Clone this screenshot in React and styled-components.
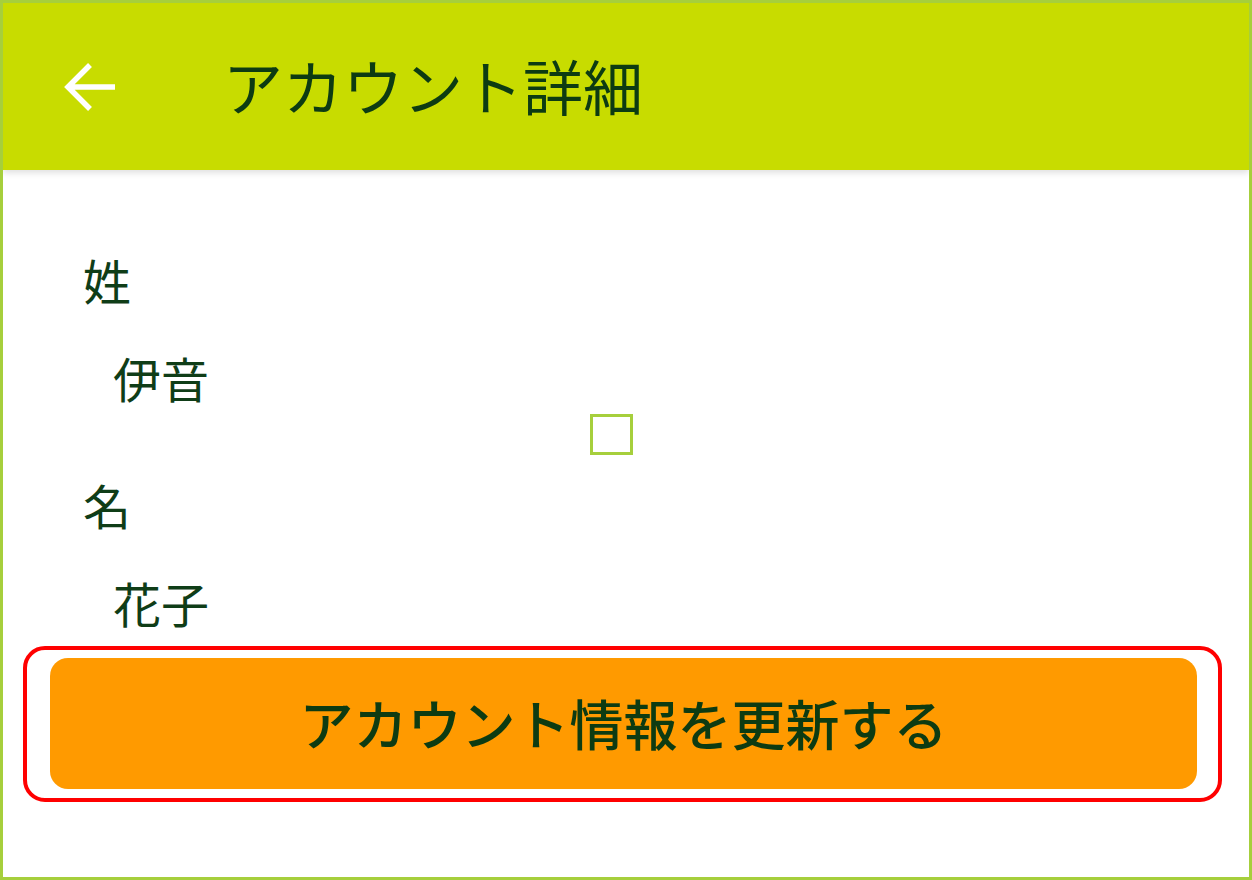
import React from 'react';
import styled, { createGlobalStyle } from 'styled-components';

const GlobalStyle = createGlobalStyle`
  html, body {
    margin: 0;
    padding: 0;
    background: #ffffff;
  }
  body {
    font-family: "Noto Sans CJK JP", "Noto Sans", sans-serif;
    color: #0f3d17;
  }
`;

const Screen = styled.div`
  position: relative;
  width: 1252px;
  height: 880px;
  box-sizing: border-box;
  border: 3px solid #a6cf3c;
  background: #ffffff;
  display: flex;
  flex-direction: column;
  overflow: hidden;
`;

const Header = styled.header`
  height: 167px;
  flex-shrink: 0;
  background: #c8dc00;
  display: flex;
  align-items: center;
  box-shadow: 0 3px 6px rgba(0, 0, 0, 0.12);
  position: relative;
  z-index: 1;
`;

const BackButton = styled.button`
  width: 72px;
  height: 72px;
  margin-left: 51px;
  padding: 0;
  border: none;
  background: transparent;
  display: flex;
  align-items: center;
  justify-content: center;
  cursor: pointer;
`;

const Title = styled.h1`
  margin: 0 0 4px 97px;
  font-size: 60px;
  font-weight: 400;
  line-height: 1;
  color: #0d3b12;
  letter-spacing: 0;
`;

const Body = styled.main`
  flex: 1;
  display: flex;
  flex-direction: column;
  padding: 80px 27px 0 20px;
`;

const Field = styled.div`
  display: flex;
  flex-direction: column;
  gap: 40px;
  padding-left: 60px;
  margin-bottom: ${(p) => p.$after || 0}px;
`;

const Label = styled.div`
  font-size: 48px;
  line-height: 58px;
`;

const Value = styled.div`
  font-size: 48px;
  line-height: 58px;
  padding-left: 30px;
`;

const Placeholder = styled.div`
  position: absolute;
  left: 587px;
  top: 411px;
  width: 43px;
  height: 41px;
  box-sizing: border-box;
  border: 3px solid #a6cf3c;
`;

const Highlight = styled.div`
  margin-top: 15px;
  border: 4px solid #ff0000;
  border-radius: 22px;
  padding: 8px 21px 9px 23px;
`;

const UpdateButton = styled.button`
  width: 100%;
  height: 131px;
  padding: 0 0 2px;
  border: none;
  border-radius: 18px;
  background: #ff9a00;
  color: #0d3b12;
  font-family: "Noto Sans CJK JP", "Noto Sans", sans-serif;
  font-size: 54px;
  font-weight: 500;
  letter-spacing: 0;
  display: flex;
  align-items: center;
  justify-content: center;
  cursor: pointer;
`;

const BackArrow = () => (
  <svg width="54" height="50" viewBox="0 0 54 50" fill="none">
    <path
      d="M52 25H6M27 3L5 25l22 22"
      stroke="#ffffff"
      strokeWidth="5.5"
      strokeLinecap="butt"
      strokeLinejoin="miter"
    />
  </svg>
);

export default function App() {
  return (
    <>
      <GlobalStyle />
      <Screen>
        <Header>
          <BackButton aria-label="戻る">
            <BackArrow />
          </BackButton>
          <Title>アカウント詳細</Title>
        </Header>
        <Body>
          <Field $after={69}>
            <Label>姓</Label>
            <Value>伊音</Value>
          </Field>
          <Field>
            <Label>名</Label>
            <Value>花子</Value>
          </Field>
          <Highlight>
            <UpdateButton>アカウント情報を更新する</UpdateButton>
          </Highlight>
        </Body>
        <Placeholder />
      </Screen>
    </>
  );
}
